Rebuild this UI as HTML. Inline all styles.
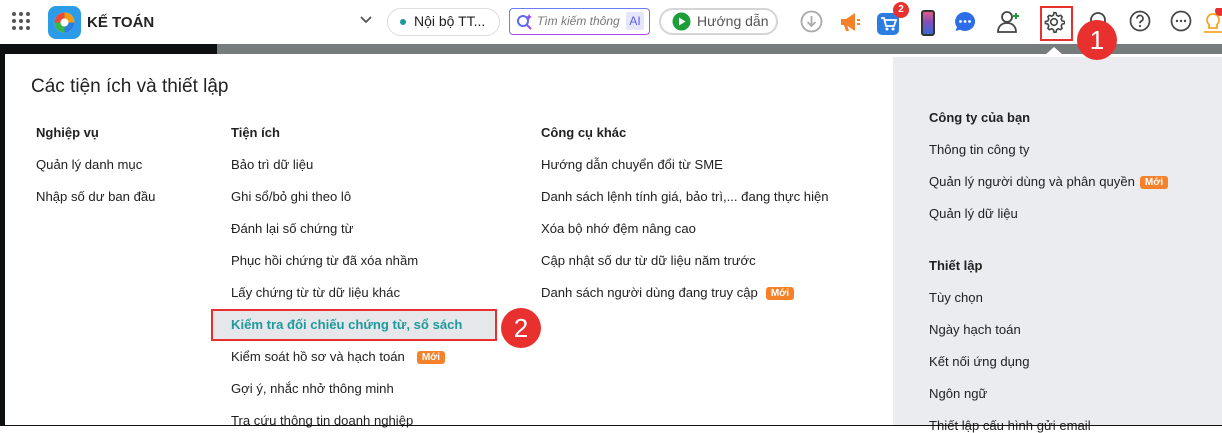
<!DOCTYPE html>
<html><head><meta charset="utf-8"><style>
*{margin:0;padding:0;box-sizing:border-box}
body{width:1222px;height:426px;overflow:hidden;background:#fff;font-family:"Liberation Sans","Noto Sans CJK SC",sans-serif;color:#212121;position:relative;font-size:13.1px}
.a{position:absolute;white-space:nowrap}
.h{font-weight:bold;font-size:13px}
.new{display:inline-block;background:#f5822a;color:#fff;font-size:10px;font-weight:bold;padding:1px 5px;border-radius:3px;margin-left:8px;vertical-align:1px}
.ic{position:absolute}
</style></head><body>
<svg class="ic" style="left:11px;top:11px" width="20" height="20"><g fill="#555"><circle cx="3" cy="3" r="2"/><circle cx="10" cy="3" r="2"/><circle cx="17" cy="3" r="2"/><circle cx="3" cy="10" r="2"/><circle cx="10" cy="10" r="2"/><circle cx="17" cy="10" r="2"/><circle cx="3" cy="17" r="2"/><circle cx="10" cy="17" r="2"/><circle cx="17" cy="17" r="2"/></g></svg>
<div class="a" style="left:48px;top:6px;width:33px;height:33px;border-radius:8px;background:#2c9be8"></div>
<svg class="ic" style="left:53px;top:11px" width="23" height="23"><circle cx="11.5" cy="11.5" r="10" fill="#fff"/><path d="M11.5 1.5A10 10 0 0 1 21.5 11.5H11.5Z" fill="#f39c12"/><path d="M21.5 11.5A10 10 0 0 1 11.5 21.5V11.5Z" fill="#2d7de0"/><path d="M11.5 21.5A10 10 0 0 1 1.5 11.5H11.5Z" fill="#3ab54a"/><path d="M1.5 11.5A10 10 0 0 1 11.5 1.5V11.5Z" fill="#e74c3c"/><circle cx="11.5" cy="11.5" r="4" fill="#fff"/></svg>
<div class="a" style="left:87px;top:14px;font-weight:bold;font-size:15px;color:#222">KẾ TOÁN</div>
<svg class="ic" style="left:359px;top:15px" width="14" height="10"><path d="M2 2l5 5 5-5" stroke="#555" stroke-width="1.8" fill="none"/></svg>
<div class="a" style="left:387px;top:8px;width:113px;height:28px;border:1px solid #ddd;border-radius:14px"></div>
<div class="a" style="left:400px;top:19px;width:6px;height:6px;border-radius:3px;background:#1a9a9a"></div>
<div class="a" style="left:414px;top:13px;font-size:14px">Nội bộ TT...</div>
<div class="a" style="left:509px;top:8px;width:141px;height:27px;border:1px solid;border-color:#6b7cf7 #b04bf0 #b04bf0 #6b7cf7;border-radius:4px"></div>
<svg class="ic" style="left:516px;top:13px" width="18" height="18"><circle cx="7" cy="8" r="5" stroke="#5b6cf0" stroke-width="2" fill="none"/><path d="M11 12l4 4" stroke="#9b4bf0" stroke-width="2"/><path d="M13 1l1 2 2 1-2 1-1 2-1-2-2-1 2-1z" fill="#9b4bf0"/></svg>
<div class="a" style="left:537px;top:14px;font-style:italic;color:#777;font-size:12px;width:86px;overflow:hidden">Tìm kiếm thông</div>
<div class="a" style="left:626px;top:12px;width:18px;height:18px;background:#e6e6fb;color:#5b5be8;font-size:12px;text-align:center;line-height:18px;border-radius:2px">AI</div>
<div class="a" style="left:659px;top:8px;width:119px;height:27px;border:2px solid #d5d5d5;border-radius:14px"></div>
<svg class="ic" style="left:672px;top:12px" width="19" height="19"><circle cx="9.5" cy="9.5" r="9" fill="#1e9e3a"/><path d="M7 5.5v8l6.5-4z" fill="#fff"/></svg>
<div class="a" style="left:697px;top:13px;font-size:14px;color:#555">Hướng dẫn</div>
<svg class="ic" style="left:800px;top:10px" width="23" height="23"><circle cx="11.5" cy="11.5" r="10" stroke="#aaa" stroke-width="1.8" fill="none"/><path d="M11.5 6v10M7.5 12l4 4 4-4" stroke="#aaa" stroke-width="1.8" fill="none"/></svg>
<svg class="ic" style="left:838px;top:10px" width="24" height="24"><path d="M3 9h5l9-6v18l-9-6H3z" fill="#f5822a"/><path d="M6 15l2 6h3l-2-6" fill="#f5822a"/><path d="M19 10h3M19 14h3" stroke="#f5822a" stroke-width="2"/></svg>
<div class="a" style="left:877px;top:13px;width:22px;height:22px;border-radius:5px;background:#2d7de0"></div>
<svg class="ic" style="left:880px;top:16px" width="17" height="16"><path d="M1 2h3l2 8h8l2-6H5" stroke="#fff" stroke-width="1.8" fill="none"/><circle cx="7" cy="13" r="1.5" fill="#fff"/><circle cx="13" cy="13" r="1.5" fill="#fff"/></svg>
<div class="a" style="left:893px;top:2px;width:16px;height:16px;border-radius:8px;background:#e8312f;color:#fff;font-size:10px;font-weight:bold;text-align:center;line-height:16px">2</div>
<div class="a" style="left:921px;top:10px;width:14px;height:26px;border-radius:3px;background:linear-gradient(#e05a8a,#7a4fc0 50%,#3a6ad0);border:2px solid #333"></div>
<svg class="ic" style="left:953px;top:10px" width="24" height="24"><path d="M12 2a10 9.5 0 1 1-5 17.7L2.5 21l1.5-4A10 9.5 0 0 1 12 2z" fill="#2d6de8"/><circle cx="7.5" cy="11.5" r="1.4" fill="#fff"/><circle cx="12" cy="11.5" r="1.4" fill="#fff"/><circle cx="16.5" cy="11.5" r="1.4" fill="#fff"/></svg>
<svg class="ic" style="left:996px;top:9px" width="26" height="26"><circle cx="11" cy="8" r="5" stroke="#444" stroke-width="1.8" fill="none"/><path d="M2 23c0-6 4-9 9-9s9 3 9 9z" stroke="#444" stroke-width="1.8" fill="none"/><path d="M20 4v6M17 7h6" stroke="#1e9e3a" stroke-width="2"/></svg>
<svg class="ic" style="left:1043px;top:11px" width="22" height="22"><path d="M11 1.5l2 .3.6 2.4 1.8 1 2.3-.9 1.4 1.5-.9 2.3 1 1.8 2.4.6v2l-2.4.6-1 1.8.9 2.3-1.4 1.5-2.3-.9-1.8 1-.6 2.4h-2l-.6-2.4-1.8-1-2.3.9-1.4-1.5.9-2.3-1-1.8-2.4-.6v-2l2.4-.6 1-1.8-.9-2.3 1.4-1.5 2.3.9 1.8-1 .6-2.4z" stroke="#444" stroke-width="1.6" fill="none"/><circle cx="11" cy="11" r="3.3" stroke="#444" stroke-width="1.6" fill="none"/></svg>
<div class="a" style="left:1040px;top:6px;width:33px;height:35px;border:2px solid #e8312f"></div>
<svg class="ic" style="left:1087px;top:10px" width="22" height="24"><path d="M4 18V10a7 7 0 0 1 14 0v8" stroke="#444" stroke-width="1.8" fill="none"/></svg>
<svg class="ic" style="left:1129px;top:10px" width="22" height="22"><circle cx="11" cy="11" r="9.5" stroke="#444" stroke-width="1.7" fill="none"/><path d="M8 8.5a3 3 0 1 1 4 2.8c-1 .4-1 1-1 2" stroke="#444" stroke-width="1.7" fill="none"/><circle cx="11" cy="16" r="1.1" fill="#444"/></svg>
<svg class="ic" style="left:1170px;top:10px" width="22" height="22"><circle cx="11" cy="11" r="9.5" stroke="#444" stroke-width="1.7" fill="none"/><circle cx="7" cy="11" r="1.2" fill="#444"/><circle cx="11" cy="11" r="1.2" fill="#444"/><circle cx="15" cy="11" r="1.2" fill="#444"/></svg>
<svg class="ic" style="left:1203px;top:8px" width="19" height="28"><path d="M10 6a6 6 0 0 0-4 10.5V20h8v-3.5A6 6 0 0 0 10 6z" stroke="#f5a623" stroke-width="1.8" fill="none"/><path d="M1 24h18" stroke="#f5a623" stroke-width="1.8"/><circle cx="17" cy="3" r="5" fill="#e8312f"/></svg>
<div class="a" style="left:0;top:44px;width:1222px;height:10px;background:#767b7c"></div>
<div class="a" style="left:0;top:44px;width:217px;height:10px;background:#0d0f10"></div>
<div class="a" style="left:0;top:54px;width:5px;height:372px;background:#0d0f10"></div>
<div class="a" style="left:5px;top:54px;width:1217px;height:371px;background:#fff;border-top-left-radius:4px"></div>
<svg class="ic" style="left:1045px;top:47px" width="18" height="8"><path d="M0 8L9 0l9 8z" fill="#fff"/></svg>
<div class="a" style="left:893px;top:57px;width:329px;height:368px;background:#ebecf0"></div>
<div class="a" style="left:31px;top:76px;font-size:19px;color:#222">Các tiện ích và thiết lập</div>
<div class="a h" style="left:36px;top:125px">Nghiệp vụ</div>
<div class="a" style="left:36px;top:157px">Quản lý danh mục</div>
<div class="a" style="left:36px;top:189px">Nhập số dư ban đầu</div>
<div class="a h" style="left:231px;top:125px">Tiện ích</div>
<div class="a" style="left:231px;top:157px">Bảo trì dữ liệu</div>
<div class="a" style="left:231px;top:189px">Ghi sổ/bỏ ghi theo lô</div>
<div class="a" style="left:231px;top:221px">Đánh lại số chứng từ</div>
<div class="a" style="left:231px;top:253px">Phục hồi chứng từ đã xóa nhầm</div>
<div class="a" style="left:231px;top:285px">Lấy chứng từ từ dữ liệu khác</div>
<div class="a" style="left:211px;top:309px;width:286px;height:32px;background:#e6e7ea;border:2px solid #e8312f"></div>
<div class="a" style="left:231px;top:317px;color:#1f9a9c;font-weight:bold">Kiểm tra đối chiếu chứng từ, sổ sách</div>
<div class="a" style="left:501px;top:308px;width:40px;height:40px;border-radius:20px;background:#e8312f;color:#fff;font-size:26px;text-align:center;line-height:40px">2</div>
<div class="a" style="left:231px;top:349px">Kiểm soát hồ sơ và hạch toán<span class="new" style="margin-left:12px">Mới</span></div>
<div class="a" style="left:231px;top:381px">Gợi ý, nhắc nhở thông minh</div>
<div class="a" style="left:231px;top:413px">Tra cứu thông tin doanh nghiệp</div>
<div class="a h" style="left:541px;top:125px">Công cụ khác</div>
<div class="a" style="left:541px;top:157px">Hướng dẫn chuyển đổi từ SME</div>
<div class="a" style="left:541px;top:189px">Danh sách lệnh tính giá, bảo trì,... đang thực hiện</div>
<div class="a" style="left:541px;top:221px">Xóa bộ nhớ đệm nâng cao</div>
<div class="a" style="left:541px;top:253px">Cập nhật số dư từ dữ liệu năm trước</div>
<div class="a" style="left:541px;top:285px">Danh sách người dùng đang truy cập<span class="new">Mới</span></div>
<div class="a h" style="left:929px;top:110px">Công ty của bạn</div>
<div class="a" style="left:929px;top:142px">Thông tin công ty</div>
<div class="a" style="left:929px;top:174px">Quản lý người dùng và phân quyền<span class="new" style="margin-left:5px">Mới</span></div>
<div class="a" style="left:929px;top:206px">Quản lý dữ liệu</div>
<div class="a h" style="left:929px;top:258px">Thiết lập</div>
<div class="a" style="left:929px;top:290px">Tùy chọn</div>
<div class="a" style="left:929px;top:322px">Ngày hạch toán</div>
<div class="a" style="left:929px;top:354px">Kết nối ứng dụng</div>
<div class="a" style="left:929px;top:386px">Ngôn ngữ</div>
<div class="a" style="left:929px;top:418px">Thiết lập cấu hình gửi email</div>
<div class="a" style="left:0;top:425px;width:1222px;height:1px;background:#111"></div>
<div class="a" style="left:1077px;top:20px;width:40px;height:40px;border-radius:20px;background:#e8312f;color:#fff;font-size:26px;text-align:center;line-height:40px">1</div>
</body></html>
